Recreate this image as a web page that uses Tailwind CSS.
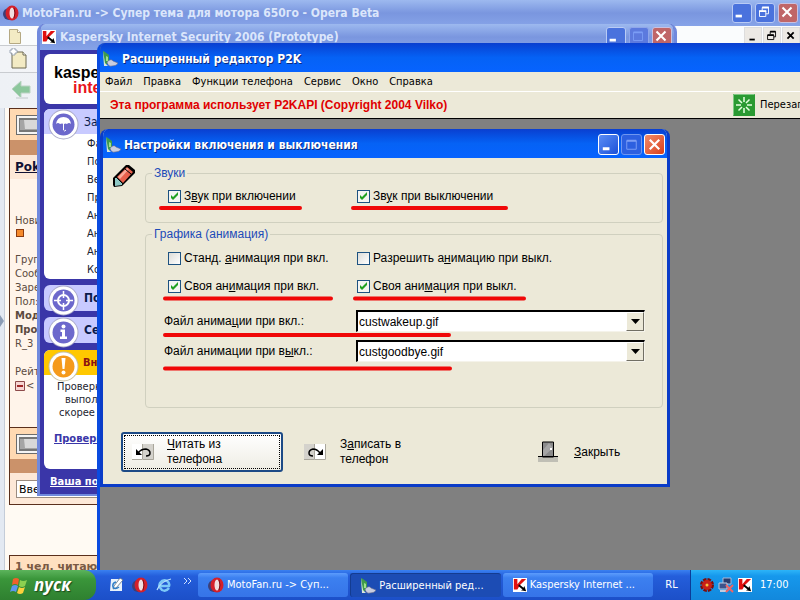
<!DOCTYPE html>
<html lang="ru">
<head>
	<meta charset="UTF-8">
	<meta name="viewport" content="width=device-width, initial-scale=1.0">
	<title>Расширенный редактор P2K</title>
	<script src="https://cdn.jsdelivr.net/npm/@tailwindcss/browser@4"></script>
</head>
<body class="h-screen flex flex-col overflow-hidden bg-[#808080] text-black text-[11px] leading-4 font-['DejaVu_Sans_Condensed','Noto_Sans',sans-serif]">

<!-- shared icons -->
<svg class="hidden">
	<symbol id="min" viewBox="0 0 20 20"><path d="M4 13h7v3H4z" fill="#fff"/></symbol>
	<symbol id="max" viewBox="0 0 20 20"><path d="M5 6h10v9H5z" fill="none" stroke="#7b9df5"/><path d="M5 5h10v2H5z" fill="#7b9df5"/></symbol>
	<symbol id="restore" viewBox="0 0 20 20"><path d="M8 9V5h7v7h-3M5 9h7v6H5z" fill="none" stroke="#fff"/><path d="M8 4h7.500v2H8zM4.500 8h8v2h-8z" fill="#fff"/></symbol>
	<symbol id="close" viewBox="0 0 20 20"><path d="M5 5l10 10M15 5L5 15" stroke="#fff" stroke-width="2.300"/></symbol>
	<symbol id="kav" viewBox="0 0 16 16"><path d="M0 0h16v16H0z" fill="#fff"/><path d="M1 1h4v6l5-6h5L8 8l-3 5H1z" fill="#e01010"/><path d="M7 7l5 4 1-2 2 6-6-1 2-1-5-4z" fill="#000"/></symbol>
	<symbol id="opera" viewBox="0 0 16 16"><ellipse cx="6" cy="9" rx="6" ry="6" fill="#3c3f78"/><ellipse cx="9" cy="8" rx="6.500" ry="7.500" fill="#d3202a"/><ellipse cx="9" cy="8" rx="2.500" ry="5.500" fill="#f0dede"/><path d="M11 3q2 5 0 10" stroke="#7d0e16" fill="none"/></symbol>
	<symbol id="p2k" viewBox="0 0 16 16"><path d="M1 0l2 1 4 3v9H2z" fill="#3f9a4c"/><path d="M1 0l1 15h4l-3-3z" fill="#d8e8d8"/><path d="M4 5l2 1v4H4z" fill="#9fe08c"/><path d="M5 11q4-4 6-1l5 2q-1 3-6 3-4 1-5-4z" fill="#c9cde0" stroke="#62688c" stroke-width=".6"/></symbol>
	<symbol id="metal" viewBox="0 0 24 20"><path d="M0 0h24v20H0z" fill="#6c6c6c"/><path d="M1 1h23v18H1z" fill="#f4f4f4"/><path d="M3 3h21v14H3z" fill="#777"/><path d="M4 5h20v10H4z" fill="#a5a5a5"/><path d="M8 5h16v9H9z" fill="#d8d8d8"/></symbol>
</svg>

<main class="relative flex-1 min-h-0 overflow-hidden">

	<!-- Opera -->
	<section class="absolute inset-0 flex flex-col overflow-hidden bg-[#fffaf3]">
		<header class="h-[26px] shrink-0 flex items-center pl-[3px] pr-[2px] bg-linear-to-b from-[#9db9ef] via-[#7a96df] to-[#86a3e8]">
			<svg class="size-4"><use href="#opera"/></svg>
			<h1 class="flex-1 ml-[3px] text-[12px] font-bold text-[#dbe6fb] whitespace-nowrap">MotoFan.ru -&gt; Супер тема для мотора 650го - Opera Beta</h1>
			<div class="flex gap-[3px]">
				<button class="size-5 rounded-[3px] border border-[#b9cbf5] bg-[#4a72dd]" aria-label="Свернуть"><svg viewBox="1 1 18 18"><use href="#min"/></svg></button>
				<button class="size-5 rounded-[3px] border border-[#b9cbf5] bg-[#4a72dd]" aria-label="Восстановить"><svg viewBox="1 1 18 18"><use href="#restore"/></svg></button>
				<button class="size-5 rounded-[3px] border border-[#c9c0e0] bg-[#c06668]" aria-label="Закрыть"><svg viewBox="1 1 18 18"><use href="#close"/></svg></button>
			</div>
		</header>
		<div class="h-5 shrink-0 flex justify-between bg-[#fafcfd] border-b border-[#c9ccd0] pl-[9px]">
			<svg class="w-3 h-4 mt-[3px]" viewBox="0 0 12 16"><path d="M.5.5h8l3 3v11H.5z" fill="#f3ebc4" stroke="#b5a983"/><path d="M8.500.5v3h3" fill="#fff" stroke="#b5a983"/></svg>
			<div class="flex gap-px pt-px">
				<button class="w-[18px] bg-[#ece9e4] border border-[#ddd]" aria-label="Свернуть вкладку"><svg viewBox="0 0 18 18"><path d="M5 12h6v2H5z"/></svg></button>
				<button class="w-[18px] bg-[#ece9e4] border border-[#ddd]" aria-label="Восстановить вкладку"><svg viewBox="0 0 18 18"><path d="M7 7V4h6v6h-2M4 8h7v5H4z" fill="none" stroke="#000"/><path d="M7 3h6v2H7zM4 7h7v2H4z"/></svg></button>
				<button class="w-[18px] bg-[#ece9e4] border border-[#ddd]" aria-label="Закрыть вкладку"><svg viewBox="0 0 18 18"><path d="M5 5l7 7M12 5l-7 7" stroke="#000" stroke-width="2"/></svg></button>
			</div>
		</div>
		<div class="h-[27px] shrink-0 bg-linear-to-r from-[#f2f4f7] to-[#fbfcfd] border-b border-[#c9ccd0] pl-[9px] pt-[2px]">
			<svg class="w-5 h-[22px]" viewBox="0 0 20 22"><path d="M3 4h11l3 3v13H3z" fill="#f3ebc4" stroke="#6f6a52"/><path d="M14 4v3h3" fill="#fff" stroke="#6f6a52"/><path d="M3 0h3v2h2v3H6v2H3V5H1V2h2z" fill="#fff" stroke="#8a97a8" stroke-width=".8"/></svg>
		</div>
		<div class="h-[35px] shrink-0 bg-linear-to-r from-[#eef1f5] to-[#fbfcfd] pl-[11px] pt-[7px]">
			<svg class="w-5 h-5" viewBox="0 0 20 20"><path d="M1 9l9-8v5h9v7h-9v5z" fill="#8cc79c" stroke="#bcd3c4"/><path d="M5 18h12" stroke="#d8dde0" stroke-width="2"/></svg>
		</div>
		<div class="flex-1 min-h-0 flex">
			<div class="w-[5px] shrink-0 bg-[#e3e9f2] border-r border-[#c4ccd8]">
				<svg class="w-1 h-3 mt-[207px]" viewBox="0 0 4 12"><path d="M0 0l4 6-4 6z" fill="#8b9cb5"/></svg>
			</div>
			<div class="w-[300px] ml-1 text-[10px] leading-[14px] text-[#5c4a40] whitespace-nowrap font-['DejaVu_Sans',sans-serif]">
				<div class="border border-[#5a2f1c] bg-[#fff4ea]">
					<div class="h-[31px] bg-[#ffd9b2] pl-[6px] pt-[6px]"><svg class="w-6 h-5"><use href="#metal"/></svg></div>
					<div class="h-[15px] bg-[#cb926a]"></div>
					<div class="h-6 bg-[#fde8d7] pl-[5px] pt-1"><a href="#" class="text-[12px] leading-4 font-bold text-[#111133] underline">Pokemon</a></div>
					<div class="h-[248px] pl-[5px] pt-[35px]">
						<p>Новичок</p>
						<span class="block size-2 ml-px mt-px mb-4 border border-[#8a3a10] bg-[#f58a2c]"></span>
						<p>Группа:</p>
						<p>Сообщений:</p>
						<p>Зарегистрирован:</p>
						<p>Пол:</p>
						<p class="font-bold">Модель:</p>
						<p class="font-bold">Прошивка:</p>
						<p>R_3</p>
						<p class="mt-[14px]">Рейтинг:</p>
						<p class="flex items-center"><svg class="size-[10px] mr-px" viewBox="0 0 10 10"><path d="M.5.5h9v9h-9z" fill="#f6d5d2" stroke="#8c4a4a"/><path d="M2 4h6v2H2z" fill="#a02828"/></svg>&lt;</p>
					</div>
					<div class="h-8 border-t border-[#5a2f1c] bg-[#ffd9b2] pl-[6px] pt-[6px]"><svg class="w-6 h-5"><use href="#metal"/></svg></div>
					<div class="h-[14px] bg-[#cb926a]"></div>
					<div class="h-[31px] bg-[#fde8d7] pl-[6px] pt-[7px]"><input type="text" value="Введите" aria-label="Поиск" class="w-40 h-[18px] block px-[2px] border border-[#9b8c80] bg-white text-black text-[11px]"></div>
				</div>
				<div class="mt-[50px] h-10 border border-[#5a2f1c] bg-[#ffe0c0] pl-[5px] pt-1 text-[11px] font-bold text-[#7a5a44]">1 чел. читают</div>
			</div>
		</div>
	</section>

	<!-- Kaspersky -->
	<section class="absolute left-[37px] top-6 w-[640px] h-[472px] flex flex-col overflow-hidden rounded-t-lg border-x-3 border-b-2 border-[#7089dd] bg-[#3a36a8]">
		<header class="h-[26px] shrink-0 flex items-center pl-[2px] pr-[2px] bg-linear-to-b from-[#9db9ef] via-[#7a96df] to-[#86a3e8]">
			<svg class="size-[14px]"><use href="#kav"/></svg>
			<h2 class="flex-1 ml-[4px] text-[12px] font-bold text-[#dbe6fb]">Kaspersky Internet Security 2006 (Prototype)</h2>
			<div class="flex gap-[3px]">
				<button class="size-5 rounded-[3px] border border-[#b9cbf5] bg-[#4a72dd]" aria-label="Свернуть"><svg viewBox="1 1 18 18"><use href="#min"/></svg></button>
				<button class="size-5 rounded-[3px] border border-[#8fa6ea] bg-[#5c7ade]" aria-label="Развернуть" disabled><svg viewBox="1 1 18 18"><use href="#max"/></svg></button>
				<button class="size-5 rounded-[3px] border border-[#c9c0e0] bg-[#c06668]" aria-label="Закрыть"><svg viewBox="1 1 18 18"><use href="#close"/></svg></button>
			</div>
		</header>
		<div class="w-[200px] px-1 pt-1 whitespace-nowrap">
			<div class="h-[50px] rounded-md bg-white pl-[10px] pt-[11px] text-[16px] leading-[15px] font-bold font-['Liberation_Sans',sans-serif]">
				<p>kaspersky</p>
				<p class="pl-[19px] text-[#e8141c]">internet</p>
			</div>
			<div class="mt-[5px] h-[170px] rounded-md bg-white overflow-hidden">
				<h3 class="h-[25px] flex items-center gap-[5px] pl-[4px] bg-[#c8caff] text-[12px] text-[#0a1a4a]">
					<svg class="size-[31px] mt-[6px] shrink-0" viewBox="0 0 31 31"><circle cx="15.500" cy="15.500" r="15" fill="#a9a9c8"/><circle cx="15.500" cy="15.500" r="14" fill="#fff"/><circle cx="15.500" cy="15.500" r="11" fill="#6c68cc"/><path d="M8 15q1-7 7.500-7t7.500 7q-2-2-4 0-1.500-1-3 0-2-1-4 0-2-2-4 0z" fill="#fff"/><path d="M15.500 14v7q1 2 2.500 0" fill="none" stroke="#fff"/></svg>
					Защита
				</h3>
				<ul class="pt-px pl-[43px] leading-[18px] text-[#1c2430]">
					<li>Файлы</li>
					<li>Почта</li>
					<li>Веб</li>
					<li>Проактивная</li>
					<li>Анти-шпион</li>
					<li>Анти-хакер</li>
					<li>Анти-спам</li>
					<li>Контроль</li>
				</ul>
			</div>
			<h3 class="mt-[6px] h-[26px] flex items-center gap-[5px] pl-[4px] rounded-md bg-[#c8caff] text-[12px] font-bold text-[#0a1a4a]">
				<svg class="size-[31px] mt-[5px] shrink-0" viewBox="0 0 31 31"><circle cx="15.500" cy="15.500" r="15" fill="#a9a9c8"/><circle cx="15.500" cy="15.500" r="14" fill="#fff"/><circle cx="15.500" cy="15.500" r="11" fill="#6c68cc"/><circle cx="15.500" cy="15.500" r="5.500" fill="none" stroke="#fff" stroke-width="2"/><path d="M15.500 6v7M15.500 18v7M6 15.500h7M18 15.500h7" stroke="#fff" stroke-width="1.500"/></svg>
				Поиск
			</h3>
			<h3 class="mt-[6px] h-[26px] flex items-center gap-[5px] pl-[4px] rounded-md bg-[#c8caff] text-[12px] font-bold text-[#0a1a4a]">
				<svg class="size-[31px] mt-[5px] shrink-0" viewBox="0 0 31 31"><circle cx="15.500" cy="15.500" r="15" fill="#a9a9c8"/><circle cx="15.500" cy="15.500" r="14" fill="#fff"/><circle cx="15.500" cy="15.500" r="11" fill="#6c68cc"/><circle cx="15.500" cy="9.500" r="2" fill="#fff"/><path d="M12.500 12.500h4.500v7h2V22h-7v-2.500h2V15h-1.500z" fill="#fff"/></svg>
				Сервис
			</h3>
			<div class="mt-[7px] h-[119px] rounded-md bg-white overflow-hidden">
				<h3 class="h-[25px] flex items-center gap-1 pl-[4px] bg-[#ffc800] font-bold text-[#8c1212]">
					<svg class="size-[31px] mt-[7px] shrink-0" viewBox="0 0 31 31"><circle cx="15.500" cy="15.500" r="15" fill="#c8bfa0"/><circle cx="15.500" cy="15.500" r="14" fill="#fff"/><circle cx="15.500" cy="15.500" r="11" fill="#f59a1c"/><path d="M13.500 7h4l-1 11h-2z" fill="#fff"/><circle cx="15.500" cy="21.500" r="2" fill="#fff"/></svg>
					Внимание
				</h3>
				<div class="pt-[5px] leading-[13px] text-[#1c2430]">
					<p class="pl-[13px]">Проверка</p>
					<p class="pl-[21px]">выполнить</p>
					<p class="pl-[15px]">скорее</p>
				</div>
				<a href="#" class="block mt-3 ml-[10px] font-bold underline text-[#3a36a8]">Проверить</a>
			</div>
			<a href="#" class="block mt-[5px] ml-[6px] font-bold underline text-white">Ваша подписка</a>
		</div>
	</section>

	<!-- P2K editor -->
	<section class="absolute left-[97px] top-[43px] right-0 bottom-0 flex flex-col overflow-hidden rounded-tl-lg border-l-3 border-[#0a4be0] bg-[#808080]">
		<header class="h-[29px] shrink-0 flex items-center pl-[2px] pt-[2px] bg-linear-to-b from-[#0a3fd0] via-[#0562f5] via-50% to-[#0763ff]">
			<svg class="size-4"><use href="#p2k"/></svg>
			<h2 class="ml-1 text-[12px] font-bold text-white whitespace-nowrap text-shadow-[1px_1px_0_#0a2a80]">Расширенный редактор P2K</h2>
		</header>
		<nav class="h-[19px] shrink-0 flex items-center gap-[11px] pl-[5px] bg-[#ece9d8] whitespace-nowrap">
			<button>Файл</button>
			<button>Правка</button>
			<button>Функции телефона</button>
			<button>Сервис</button>
			<button>Окно</button>
			<button>Справка</button>
		</nav>
		<div class="h-7 shrink-0 flex items-center justify-between pl-[10px] bg-[#ece9d8] border-t border-t-white border-b border-b-black whitespace-nowrap">
			<p class="text-[12px] font-bold text-[#e00000] font-['Liberation_Sans',sans-serif]">Эта программа использует P2KAPI (Copyright 2004 Vilko)</p>
			<button class="w-[67px] flex items-center gap-[5px] overflow-hidden">
				<svg class="size-[22px] shrink-0" viewBox="0 0 22 22"><path d="M0 0h22v22H0z" fill="#2a9a32"/><path d="M.5 21.500V.5h21" fill="none" stroke="#7fc884"/><path d="M11 3v5M11 14v5M3 11h5M14 11h5M5.500 5.500L9 9M13 13l3.500 3.500M16.500 5.500L13 9M9 13l-3.500 3.500" stroke="#e6ffe0" stroke-width="1.500"/></svg>
				Перезагрузить
			</button>
		</div>

		<div class="relative flex-1">
			<!-- settings dialog -->
			<div class="absolute left-0 top-[10px] w-[570px] h-[358px] flex flex-col overflow-hidden rounded-t-lg border-x-3 border-b-3 border-[#0a3cc8] bg-[#ece9d8]">
				<header class="h-[29px] shrink-0 flex items-center pl-[2px] pr-[2px] pt-[2px] bg-linear-to-b from-[#0a3fd0] via-[#0562f5] via-50% to-[#0763ff]">
					<svg class="size-4"><use href="#p2k"/></svg>
					<h2 class="flex-1 ml-[3px] text-[12px] font-bold text-white text-shadow-[1px_1px_0_#0a2a80]">Настройки включения и выключения</h2>
					<div class="flex gap-[2px]">
						<button class="size-[21px] rounded-[3px] border border-white bg-linear-to-br from-[#5a8cf5] to-[#1c50d8]" aria-label="Свернуть"><svg viewBox="0 0 20 20"><use href="#min"/></svg></button>
						<button class="size-[21px] rounded-[3px] border border-[#6f96f0] bg-[#2c5fe0]" aria-label="Развернуть" disabled><svg viewBox="0 0 20 20"><use href="#max"/></svg></button>
						<button class="size-[21px] rounded-[3px] border border-white bg-linear-to-br from-[#f08a68] to-[#d83c14]" aria-label="Закрыть"><svg viewBox="0 0 20 20"><use href="#close"/></svg></button>
					</div>
				</header>

				<form class="relative flex-1 flex flex-col pt-[7px] text-[12px] font-['Liberation_Sans',sans-serif] whitespace-nowrap">
					<div class="flex pl-[9px] pr-1">
						<svg class="w-[24px] h-[24px] shrink-0" viewBox="0 0 24 24"><path d="M1 13L14 0h3l6 5v3L10 21l-8 1-1-2z" fill="#000"/><path d="M5 12L15 2l6 5-10 11z" fill="#e8604c"/><path d="M6 12l9-9 2 1-9 10z" fill="#f8a898"/><path d="M13 4l6 5" stroke="#000"/><path d="M3 13l2 0 5 5v2l-7 1z" fill="#8fc8c4"/><path d="M5 13l5 5" stroke="#000"/></svg>
						<div class="flex-1 ml-[9px]">
							<fieldset class="h-[58px] border border-[#d0d0bf] rounded-[4px]">
								<legend class="ml-[6px] px-[2px] text-[#1c4bb8]">Звуки</legend>
								<div class="grid grid-cols-[189px_1fr] pl-[22px] pt-[3px]">
									<label class="h-6 flex items-center gap-[2px]">
										<input type="checkbox" checked class="appearance-none size-[13px] border border-[#1d5281] bg-[#f5f5f2]">
										<svg class="size-[13px] -ml-[15px] mr-px pointer-events-none" viewBox="0 0 13 13"><path d="M3 5v3l2 2 5-5V2L5 7z" fill="#21a121"/></svg>
										<span>З<u>в</u>ук при включении</span>
									</label>
									<label class="h-6 flex items-center gap-[2px]">
										<input type="checkbox" checked class="appearance-none size-[13px] border border-[#1d5281] bg-[#f5f5f2]">
										<svg class="size-[13px] -ml-[15px] mr-px pointer-events-none" viewBox="0 0 13 13"><path d="M3 5v3l2 2 5-5V2L5 7z" fill="#21a121"/></svg>
										<span>Зв<u>у</u>к при выключении</span>
									</label>
								</div>
							</fieldset>

							<fieldset class="mt-[3px] h-[182px] border border-[#d0d0bf] rounded-[4px]">
								<legend class="ml-[6px] px-[2px] text-[#1c4bb8]">Графика (анимация)</legend>
								<div class="grid grid-cols-[189px_1fr] gap-y-1 pl-[22px] pt-1">
									<label class="h-6 flex items-center gap-[3px]">
										<input type="checkbox" class="appearance-none size-[13px] border border-[#1d5281] bg-linear-to-br from-[#dcdcd8] to-white">
										<span>Станд. <u>а</u>нимация при вкл.</span>
									</label>
									<label class="h-6 flex items-center gap-[3px]">
										<input type="checkbox" class="appearance-none size-[13px] border border-[#1d5281] bg-linear-to-br from-[#dcdcd8] to-white">
										<span>Разрешить а<u>н</u>имацию при выкл.</span>
									</label>
									<label class="h-6 flex items-center gap-[2px]">
										<input type="checkbox" checked class="appearance-none size-[13px] border border-[#1d5281] bg-[#f5f5f2]">
										<svg class="size-[13px] -ml-[15px] mr-px pointer-events-none" viewBox="0 0 13 13"><path d="M3 5v3l2 2 5-5V2L5 7z" fill="#21a121"/></svg>
										<span>Своя ан<u>и</u>мация при вкл.</span>
									</label>
									<label class="h-6 flex items-center gap-[2px]">
										<input type="checkbox" checked class="appearance-none size-[13px] border border-[#1d5281] bg-[#f5f5f2]">
										<svg class="size-[13px] -ml-[15px] mr-px pointer-events-none" viewBox="0 0 13 13"><path d="M3 5v3l2 2 5-5V2L5 7z" fill="#21a121"/></svg>
										<span>Своя ани<u>м</u>ация при выкл.</span>
									</label>
								</div>
								<div class="grid grid-cols-[192px_1fr] gap-y-2 items-center mt-3 pl-[18px] pr-[17px]">
									<label for="wakeup">Файл анима<u>ц</u>ии при вкл.:</label>
									<div class="relative">
										<select id="wakeup" class="block w-full h-[22px] appearance-none pl-px border border-t-2 border-l-2 border-t-black border-l-black border-r-[#f5f3ea] border-b-[#f5f3ea] bg-white"><option>custwakeup.gif</option></select>
										<span class="absolute right-px top-[2px] bottom-px w-[18px] flex items-center justify-center bg-[#ece9d8] border border-t-white border-l-white border-r-[#716f64] border-b-[#716f64] pointer-events-none"><svg class="w-[9px] h-[5px]" viewBox="0 0 9 5"><path d="M0 0h9L4.500 5z"/></svg></span>
									</div>
									<label for="goodbye">Файл анимации при в<u>ы</u>кл.:</label>
									<div class="relative">
										<select id="goodbye" class="block w-full h-[22px] appearance-none pl-px border border-t-2 border-l-2 border-t-black border-l-black border-r-[#f5f3ea] border-b-[#f5f3ea] bg-white"><option>custgoodbye.gif</option></select>
										<span class="absolute right-px top-[2px] bottom-px w-[18px] flex items-center justify-center bg-[#ece9d8] border border-t-white border-l-white border-r-[#716f64] border-b-[#716f64] pointer-events-none"><svg class="w-[9px] h-[5px]" viewBox="0 0 9 5"><path d="M0 0h9L4.500 5z"/></svg></span>
									</div>
								</div>
							</fieldset>
						</div>
					</div>

					<div class="flex mt-6 pl-[18px] leading-[15px]">
						<button type="button" class="w-[162px] h-10 flex items-center text-left pl-[9px] gap-[13px] rounded-[3px] border-2 border-[#1c4a86] bg-linear-to-b from-white to-[#eeede4] outline-1 -outline-offset-4 outline-dotted outline-black">
							<svg class="w-[22px] h-4" viewBox="0 0 22 16"><path d="M0 0h11v16H0z" fill="#fff"/><path d="M11 0h11v16H11z" fill="#d4d2cc"/><path d="M0 15.500h10.500V0M11 15.500h10.500V0" fill="none" stroke="#aaa79c"/><path d="M6 9q3-4 8-4 4 1 4 4t-4 3" fill="none" stroke="#000" stroke-width="1.500"/><path d="M4 5v6h6z"/></svg>
							<span><u>Ч</u>итать из<br>телефона</span>
						</button>
						<button type="button" class="ml-[11px] w-[162px] h-10 flex items-center text-left pl-[10px] gap-[14px]">
							<svg class="w-[22px] h-4" viewBox="0 0 22 16"><path d="M0 0h11v16H0z" fill="#d4d2cc"/><path d="M11 0h11v16H11z" fill="#fff"/><path d="M0 15.500h10.500V0M11 15.500h10.500V0" fill="none" stroke="#aaa79c"/><path d="M16 9q-3-4-7-4-4 1-4 4t4 3" fill="none" stroke="#000" stroke-width="1.500"/><path d="M19 5v6h-6z"/></svg>
							<span>З<u>а</u>писать в<br>телефон</span>
						</button>
						<button type="button" class="ml-[82px] h-10 flex items-center gap-4">
							<svg class="w-5 h-[22px]" viewBox="0 0 20 22"><path d="M0 16h20v5H0z" fill="#c0bfb5"/><path d="M4.500 1h11v15h-11z" fill="#8a8a8a" stroke="#000"/><path d="M5 16V9l6-7 4 5z" fill="#a5a5a5"/><path d="M0 15.500h20" stroke="#000"/><path d="M12 7h2v2h-2z" fill="#fff"/></svg>
							<span><u>З</u>акрыть</span>
						</button>
					</div>

					<!-- red marks over the fields -->
					<svg class="absolute inset-0 w-full h-full pointer-events-none" fill="none" stroke="#f00808" stroke-width="4" stroke-linecap="round">
						<path d="M58 50H197M250 50H403M62 140.500H228M252 140.500H421M62 177H346M62 210.500H347"/>
					</svg>
				</form>
			</div>
		</div>
	</section>
</main>

<!-- taskbar -->
<footer class="h-[30px] shrink-0 flex text-white whitespace-nowrap bg-linear-to-b from-[#3a80f0] via-[#245edb] via-20% to-[#1c4fc8]">
	<button class="w-24 flex items-center gap-[6px] pl-[10px] rounded-r-xl bg-linear-to-b from-[#5cb45c] via-[#3a963a] via-30% to-[#2f8030] text-[17px] leading-5 font-bold italic text-shadow-[1px_1px_1px_#1c4a1c] font-['Open_Sans',sans-serif]">
		<svg class="w-[18px] h-[17px]" viewBox="0 0 18 17"><path d="M3 2q3-2 6 0L8 8Q5 6 2 8z" fill="#f0602c"/><path d="M10 3q3 2 7 0l-2 6q-3 2-6 0z" fill="#8cd050"/><path d="M2 9q3-2 6 0l-2 6q-3-2-6 0z" fill="#5c96f0"/><path d="M9 10q3 2 6 0l-2 6q-3 2-6 0z" fill="#fcd03c"/></svg>
		пуск
	</button>
	<div class="w-[102px] flex items-center pl-3 gap-2">
		<svg class="size-4" viewBox="0 0 16 16"><path d="M3 2h11v12H2z" fill="#e8f2fc"/><path d="M12 1l3 2-7 8-3 1 1-3z" fill="#fff" stroke="#5b6c80" stroke-width=".8"/><path d="M11 10q-4 3-6 0-1-4 3-5" fill="none" stroke="#2b7cc8" stroke-width="1.500"/></svg>
		<svg class="size-4"><use href="#opera"/></svg>
		<svg class="size-4" viewBox="0 0 16 16"><path d="M13 11q-3 4-7 2-4-3-2-7 3-4 7-2 3 2 2 5H4" fill="none" stroke="#7cc8f8" stroke-width="2.500"/><path d="M1 13Q5 4 15 2" fill="none" stroke="#b8e0fc" stroke-width="1.200"/></svg>
		<svg class="w-2 h-6 ml-1" viewBox="0 0 8 24"><path d="M0 5l3 3-3 3M4 5l3 3-3 3" fill="none" stroke="#cfe0ff"/></svg>
	</div>
	<div class="flex-1 min-w-0 grid grid-cols-3 gap-[2px] py-[3px] text-left">
		<button class="flex items-center gap-[3px] pl-[10px] rounded-[3px] bg-linear-to-b from-[#5c9cfc] via-[#3c80f0] via-20% to-[#3674e8]"><svg class="size-4"><use href="#opera"/></svg>MotoFan.ru -&gt; Суп...</button>
		<button class="flex items-center gap-[3px] pl-[9px] rounded-[3px] bg-[#1c4cb4] border-t border-l border-[#143c90]"><svg class="size-4"><use href="#p2k"/></svg>Расширенный ред...</button>
		<button class="flex items-center gap-[3px] pl-[10px] rounded-[3px] bg-linear-to-b from-[#5c9cfc] via-[#3c80f0] via-20% to-[#3674e8]"><svg class="size-[14px]"><use href="#kav"/></svg>Kaspersky Internet ...</button>
	</div>
	<div class="w-[37px] flex items-center justify-center">RL</div>
	<div class="w-[110px] flex items-center gap-[4px] pl-[9px] border-l border-[#0c3c98] bg-linear-to-b from-[#2cb4f8] via-[#1698ec] via-20% to-[#1288dc]">
		<svg class="size-[14px]" viewBox="0 0 14 14"><circle cx="7" cy="7" r="5" fill="none" stroke="#7c0c0c" stroke-width="4" stroke-dasharray="3 .9"/><circle cx="7" cy="7" r="5" fill="#c82018"/><circle cx="7" cy="7" r="1.500" fill="#f8c040"/></svg>
		<svg class="size-4" viewBox="0 0 16 16"><path d="M5 1h8v6H5z" fill="#283c6c" stroke="#a8b8d8"/><path d="M1 6h8v6H1z" fill="#3c548c" stroke="#c0cce0"/><path d="M2 13h6v2H2z" fill="#c0cce0"/><path d="M8 8l7 7M15 8l-7 7" stroke="#f06464" stroke-width="2"/></svg>
		<svg class="size-[14px]"><use href="#kav"/></svg>
		<time class="ml-1">17:00</time>
	</div>
</footer>
</body>
</html>
